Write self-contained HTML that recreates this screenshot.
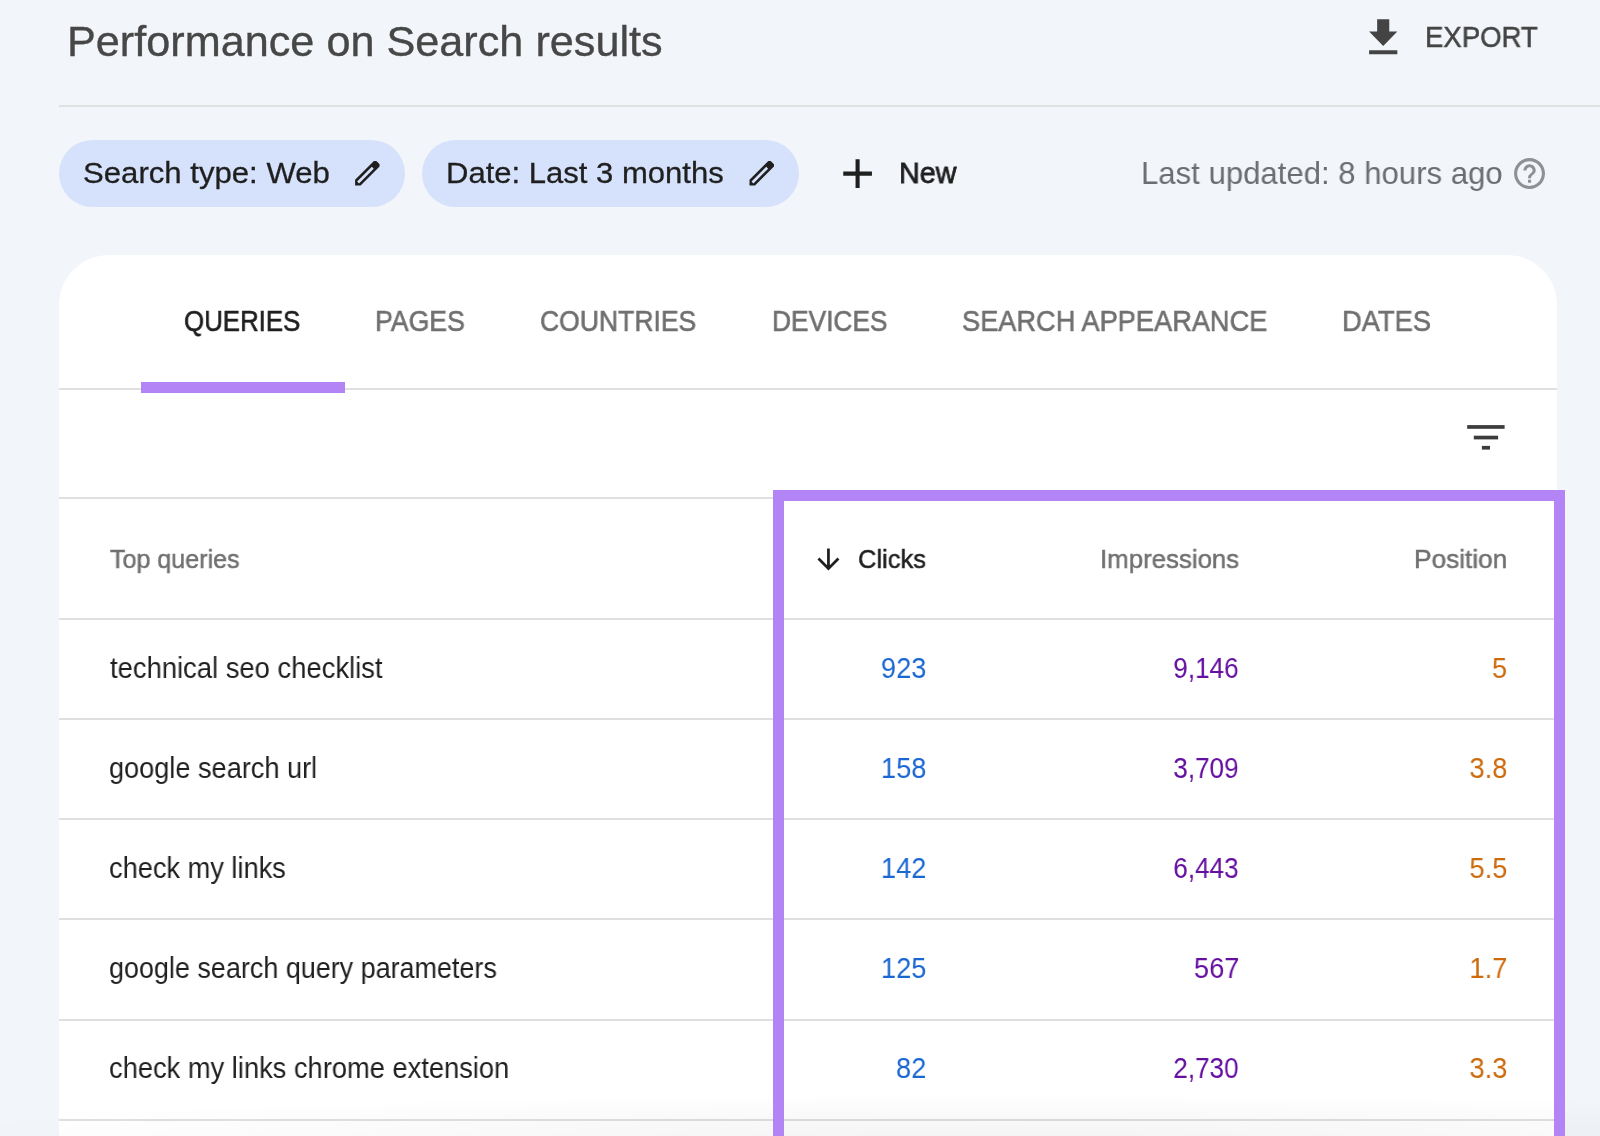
<!DOCTYPE html>
<html><head><meta charset="utf-8">
<style>
html,body{margin:0;padding:0;}
body{width:1600px;height:1136px;overflow:hidden;background:#f2f5fa;position:relative;font-family:"Liberation Sans",sans-serif;}
.t{position:absolute;white-space:nowrap;line-height:1;will-change:transform;}
.line{position:absolute;background:#e0e0e0;}
.ic{position:absolute;display:block;}
.chip{position:absolute;top:140px;height:67px;border-radius:34px;background:#d6e2fb;}
#card{position:absolute;left:59px;top:255px;width:1498px;height:1000px;background:#fff;border-radius:50px 50px 0 0;}
#ind{position:absolute;left:141px;top:382px;width:204px;height:11px;background:#b284f5;}
#box{position:absolute;left:773px;top:490px;width:770px;height:700px;border:11px solid #b284f5;}
#fade{position:absolute;left:0;top:1080px;width:1600px;height:56px;background:radial-gradient(ellipse 1100px 42px at 1000px 100%,rgba(0,0,0,0.045),rgba(0,0,0,0));}
#title{left:66.92px;top:20.88px;font-size:42.2px;color:#474747;-webkit-text-stroke:0.35px #474747;transform:scaleX(1.0243);transform-origin:0 50%;}
#export{left:1425.00px;top:23.39px;font-size:28.6px;color:#444444;-webkit-text-stroke:0.5px #444444;transform:scaleX(0.9633);transform-origin:0 50%;}
#c1t{left:82.96px;top:157.87px;font-size:29.8px;color:#1f1f1f;-webkit-text-stroke:0.3px #1f1f1f;transform:scaleX(1.0446);transform-origin:0 50%;}
#c2t{left:445.93px;top:157.87px;font-size:29.8px;color:#1f1f1f;-webkit-text-stroke:0.3px #1f1f1f;transform:scaleX(1.0415);transform-origin:0 50%;}
#newt{left:899.24px;top:157.67px;font-size:29.8px;color:#1f1f1f;-webkit-text-stroke:0.8px #1f1f1f;transform:scaleX(0.9651);transform-origin:0 50%;}
#upd{left:1141.05px;top:156.71px;font-size:32px;color:#6b6d70;transform:scaleX(0.9727);transform-origin:0 50%;}
#tq{left:184.39px;top:306.13px;font-size:29.5px;color:#1f1f1f;-webkit-text-stroke:0.6px #1f1f1f;transform:scaleX(0.8762);transform-origin:0 50%;}
#tp{left:374.79px;top:306.13px;font-size:29.5px;color:#707070;-webkit-text-stroke:0.6px #707070;transform:scaleX(0.9038);transform-origin:0 50%;}
#tc{left:540.24px;top:306.13px;font-size:29.5px;color:#707070;-webkit-text-stroke:0.6px #707070;transform:scaleX(0.8991);transform-origin:0 50%;}
#td{left:771.72px;top:306.13px;font-size:29.5px;color:#707070;-webkit-text-stroke:0.6px #707070;transform:scaleX(0.8920);transform-origin:0 50%;}
#ts{left:962.25px;top:306.13px;font-size:29.5px;color:#707070;-webkit-text-stroke:0.6px #707070;transform:scaleX(0.9221);transform-origin:0 50%;}
#tdt{left:1342.14px;top:306.13px;font-size:29.5px;color:#707070;-webkit-text-stroke:0.6px #707070;transform:scaleX(0.9259);transform-origin:0 50%;}
#h1{left:110.00px;top:545.77px;font-size:26.5px;color:#707070;-webkit-text-stroke:0.5px #707070;transform:scaleX(0.9457);transform-origin:0 50%;}
#h2{left:857.61px;top:545.77px;font-size:26.5px;color:#1f1f1f;-webkit-text-stroke:0.5px #1f1f1f;transform:scaleX(0.9604);transform-origin:0 50%;}
#h3{left:1099.88px;top:545.77px;font-size:26.5px;color:#707070;-webkit-text-stroke:0.5px #707070;transform:scaleX(0.9742);transform-origin:0 50%;}
#h4{left:1414.00px;top:545.77px;font-size:26.5px;color:#707070;-webkit-text-stroke:0.5px #707070;transform:scaleX(0.9893);transform-origin:0 50%;}
#q0{left:110.00px;top:654.02px;font-size:28.8px;color:#1f1f1f;transform:scaleX(0.9513);transform-origin:0 50%;}
#c0{right:674.00px;top:653.85px;font-size:29.0px;color:#1a67d2;transform:scaleX(0.9400);transform-origin:100% 50%;}
#i0{right:361.60px;top:653.85px;font-size:29.0px;color:#650fa0;transform:scaleX(0.9000);transform-origin:100% 50%;}
#p0{right:93.00px;top:653.85px;font-size:29.0px;color:#cc6a0c;transform:scaleX(0.9400);transform-origin:100% 50%;}
#q1{left:109.06px;top:754.02px;font-size:28.8px;color:#1f1f1f;transform:scaleX(0.9420);transform-origin:0 50%;}
#c1{right:674.00px;top:753.85px;font-size:29.0px;color:#1a67d2;transform:scaleX(0.9400);transform-origin:100% 50%;}
#i1{right:361.60px;top:753.85px;font-size:29.0px;color:#650fa0;transform:scaleX(0.9000);transform-origin:100% 50%;}
#p1{right:93.00px;top:753.85px;font-size:29.0px;color:#cc6a0c;transform:scaleX(0.9400);transform-origin:100% 50%;}
#q2{left:109.06px;top:854.02px;font-size:28.8px;color:#1f1f1f;transform:scaleX(0.9445);transform-origin:0 50%;}
#c2{right:674.00px;top:853.85px;font-size:29.0px;color:#1a67d2;transform:scaleX(0.9400);transform-origin:100% 50%;}
#i2{right:361.60px;top:853.85px;font-size:29.0px;color:#650fa0;transform:scaleX(0.9000);transform-origin:100% 50%;}
#p2{right:93.00px;top:853.85px;font-size:29.0px;color:#cc6a0c;transform:scaleX(0.9400);transform-origin:100% 50%;}
#q3{left:109.06px;top:954.02px;font-size:28.8px;color:#1f1f1f;transform:scaleX(0.9356);transform-origin:0 50%;}
#c3{right:674.00px;top:953.85px;font-size:29.0px;color:#1a67d2;transform:scaleX(0.9400);transform-origin:100% 50%;}
#i3{right:360.60px;top:953.85px;font-size:29.0px;color:#650fa0;transform:scaleX(0.9400);transform-origin:100% 50%;}
#p3{right:93.00px;top:953.85px;font-size:29.0px;color:#cc6a0c;transform:scaleX(0.9400);transform-origin:100% 50%;}
#q4{left:109.05px;top:1054.02px;font-size:28.8px;color:#1f1f1f;transform:scaleX(0.9472);transform-origin:0 50%;}
#c4{right:674.00px;top:1053.85px;font-size:29.0px;color:#1a67d2;transform:scaleX(0.9400);transform-origin:100% 50%;}
#i4{right:361.60px;top:1053.85px;font-size:29.0px;color:#650fa0;transform:scaleX(0.9000);transform-origin:100% 50%;}
#p4{right:93.00px;top:1053.85px;font-size:29.0px;color:#cc6a0c;transform:scaleX(0.9400);transform-origin:100% 50%;}
</style></head>
<body>
<div class="line" style="left:59px;top:105px;width:1541px;height:2px;"></div>
<svg class="ic" style="left:1358.66px;top:13.2px" width="48.43" height="49.56" viewBox="0 0 24 24" preserveAspectRatio="none"><path d="M19 9h-4V3H9v6H5l7 7 7-7zM5 18v2h14v-2H5z" fill="#444"/></svg>

<div class="chip" style="left:59px;width:346px;"></div>
<div class="chip" style="left:422px;width:377px;"></div>
<svg class="ic" style="left:0;top:0" width="800" height="200"><path d="M355.10 185.50 L355.10 179.80 L373.92 160.94 L376.32 160.94 L379.57 164.19 L379.57 166.59 L360.60 185.50Z M357.12 181.48 L371.83 166.77 L373.74 168.68 L359.03 183.39Z" fill="#1f1f1f" fill-rule="evenodd"/><path transform="translate(394.4 0)" d="M355.10 185.50 L355.10 179.80 L373.92 160.94 L376.32 160.94 L379.57 164.19 L379.57 166.59 L360.60 185.50Z M357.12 181.48 L371.83 166.77 L373.74 168.68 L359.03 183.39Z" fill="#1f1f1f" fill-rule="evenodd"/></svg>

<svg class="ic" style="left:832.95px;top:148.65px" width="49.2" height="49.2" viewBox="0 0 24 24"><path d="M19 13h-6v6h-2v-6H5v-2h6V5h2v6h6v2z" fill="#1f1f1f"/></svg>
<svg class="ic" style="left:1511px;top:154.6px" width="37.1" height="37.1" viewBox="0 0 24 24"><path d="M11 18h2v-2h-2v2zm1-16C6.48 2 2 6.48 2 12s4.48 10 10 10 10-4.48 10-10S17.52 2 12 2zm0 18c-4.41 0-8-3.59-8-8s3.59-8 8-8 8 3.59 8 8-3.59 8-8 8zm0-14c-2.21 0-4 1.79-4 4h2c0-1.1.9-2 2-2s2 .9 2 2c0 2-3 1.75-3 5h2c0-2.25 3-2.5 3-5 0-2.21-1.790-4-4-4z" fill="#8e9094"/></svg>

<div id="card"></div>
<div class="line" style="left:59px;top:388px;width:1498px;height:2px;"></div>
<div id="ind"></div>

<svg class="ic" style="left:0;top:0" width="1600" height="500">
<rect x="1467.2" y="425.1" width="37.4" height="3.7" fill="#3c3c3c"/>
<rect x="1473.8" y="435.7" width="24.3" height="3.7" fill="#3c3c3c"/>
<rect x="1481.9" y="445.9" width="8.1" height="3.7" fill="#3c3c3c"/>
</svg>

<div class="line" style="left:59px;top:497px;width:1498px;height:2px;"></div>
<svg class="ic" style="left:812.4px;top:543.1px" width="32.9" height="32.9" viewBox="0 0 24 24"><path d="M20 12l-1.41-1.41L13 16.17V4h-2v12.17l-5.58-5.59L4 12l8 8 8-8z" fill="#1f1f1f"/></svg>
<div class="line" style="left:59px;top:618px;width:1498px;height:2px;"></div>
<div class="line" style="left:59px;top:718px;width:1498px;height:2px;"></div>
<div class="line" style="left:59px;top:818px;width:1498px;height:2px;"></div>
<div class="line" style="left:59px;top:918px;width:1498px;height:2px;"></div>
<div class="line" style="left:59px;top:1018.5px;width:1498px;height:2px;"></div>
<div class="line" style="left:59px;top:1118.5px;width:1498px;height:2px;"></div>
<div id="title" class="t">Performance on Search results</div>
<div id="export" class="t">EXPORT</div>
<div id="c1t" class="t">Search type: Web</div>
<div id="c2t" class="t">Date: Last 3 months</div>
<div id="newt" class="t">New</div>
<div id="upd" class="t">Last updated: 8 hours ago</div>
<div id="tq" class="t">QUERIES</div>
<div id="tp" class="t">PAGES</div>
<div id="tc" class="t">COUNTRIES</div>
<div id="td" class="t">DEVICES</div>
<div id="ts" class="t">SEARCH APPEARANCE</div>
<div id="tdt" class="t">DATES</div>
<div id="h1" class="t">Top queries</div>
<div id="h2" class="t">Clicks</div>
<div id="h3" class="t">Impressions</div>
<div id="h4" class="t">Position</div>
<div id="q0" class="t">technical seo checklist</div>
<div id="c0" class="t">923</div>
<div id="i0" class="t">9,146</div>
<div id="p0" class="t">5</div>
<div id="q1" class="t">google search url</div>
<div id="c1" class="t">158</div>
<div id="i1" class="t">3,709</div>
<div id="p1" class="t">3.8</div>
<div id="q2" class="t">check my links</div>
<div id="c2" class="t">142</div>
<div id="i2" class="t">6,443</div>
<div id="p2" class="t">5.5</div>
<div id="q3" class="t">google search query parameters</div>
<div id="c3" class="t">125</div>
<div id="i3" class="t">567</div>
<div id="p3" class="t">1.7</div>
<div id="q4" class="t">check my links chrome extension</div>
<div id="c4" class="t">82</div>
<div id="i4" class="t">2,730</div>
<div id="p4" class="t">3.3</div>
<div id="fade"></div>
<div id="box"></div>
</body></html>
